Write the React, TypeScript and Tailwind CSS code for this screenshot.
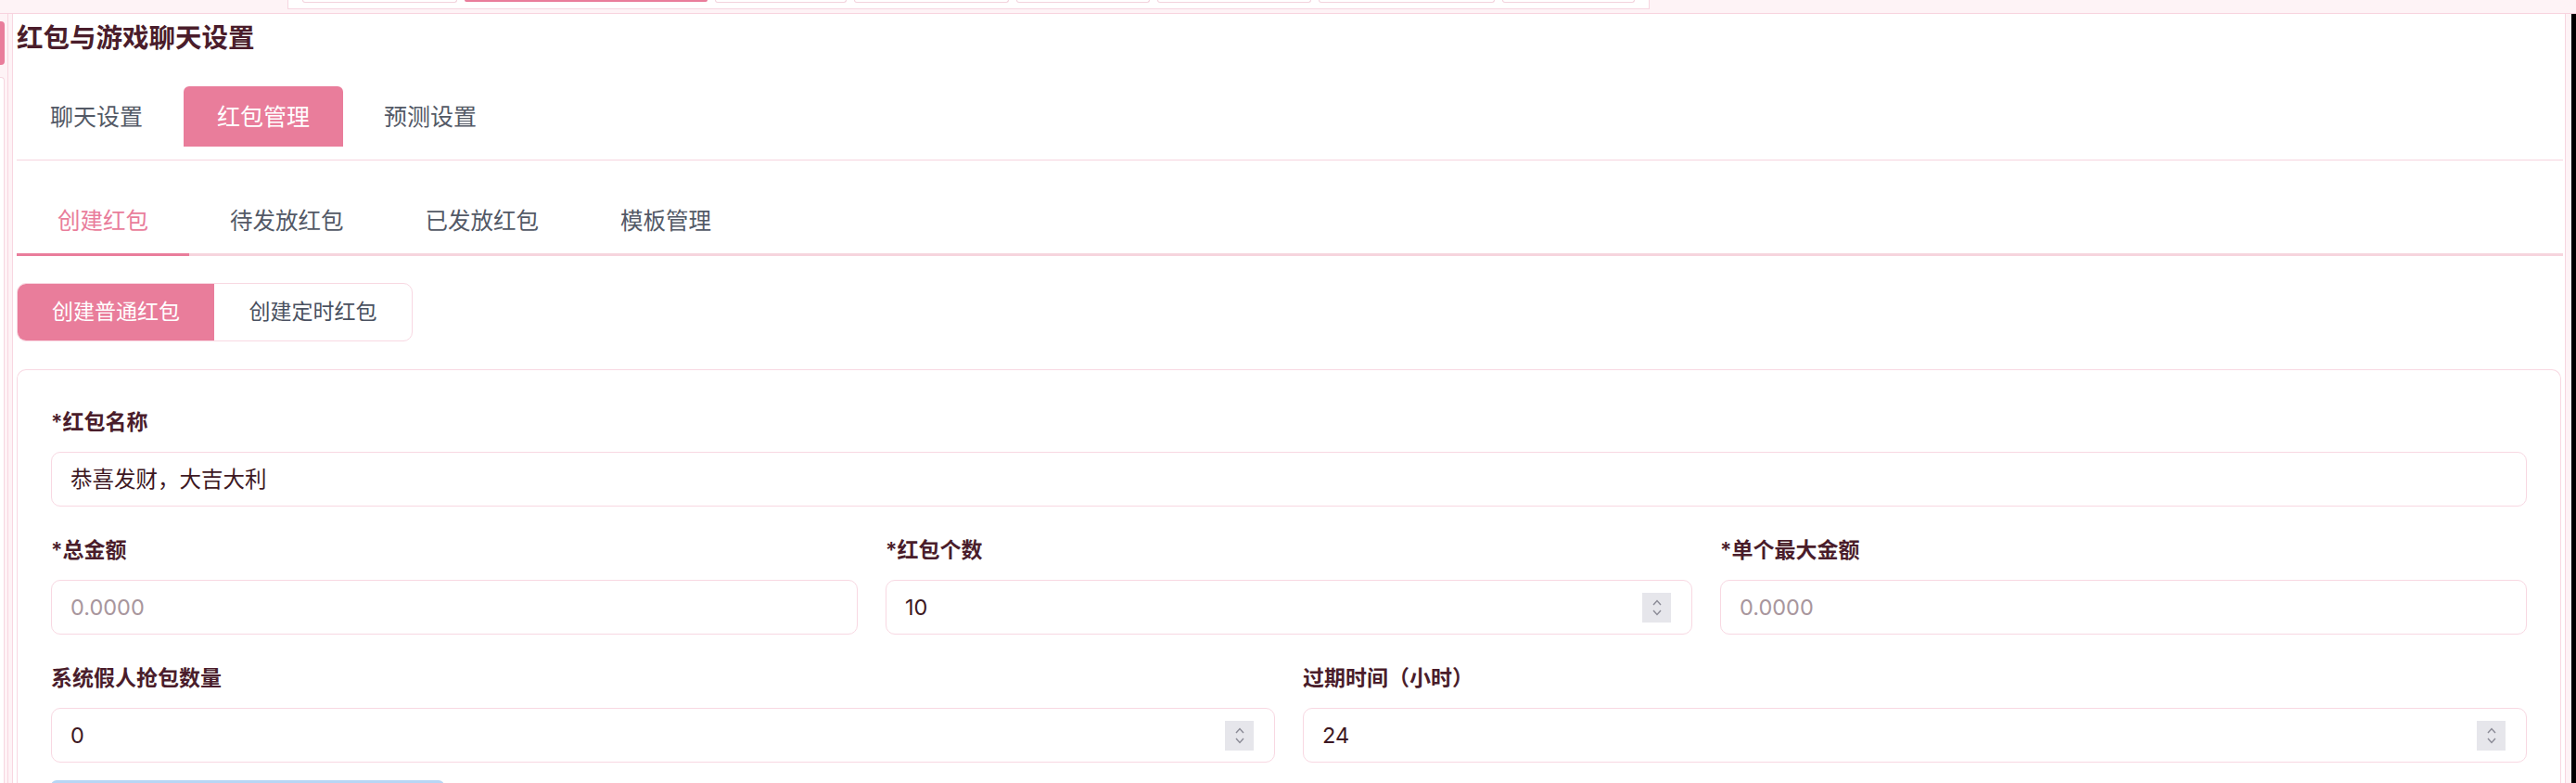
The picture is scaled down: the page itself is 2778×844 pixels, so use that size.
import React from 'react';

const PINK = 'bg-[#e97d9b]';

// bottoms of the top navigation tabs that stay visible above the card
const topTabs = [
  { w: 'w-[167px]' },
  { w: 'w-[262px]', active: true },
  { w: 'w-[142px]' },
  { w: 'w-[167px]' },
  { w: 'w-[144px]' },
  { w: 'w-[166px]' },
  { w: 'w-[190px]' },
  { w: 'w-[143px]' },
];

const Spinner: React.FC = () => (
  <div className="flex h-[32px] w-[31px] shrink-0 flex-col items-center justify-center gap-[4px] bg-[#e6e6eb]">
    <svg width="10" height="7" viewBox="0 0 10 7" fill="none">
      <polyline points="1,6 5,1.5 9,6" stroke="#8b8b96" strokeWidth="1.4" />
    </svg>
    <svg width="10" height="7" viewBox="0 0 10 7" fill="none">
      <polyline points="1,1 5,5.5 9,1" stroke="#8b8b96" strokeWidth="1.4" />
    </svg>
  </div>
);

interface FieldProps {
  label: string;
  value?: string;
  placeholder?: string;
  spinner?: boolean;
}

const Field: React.FC<FieldProps> = ({ label, value, placeholder, spinner }) => (
  <div className="flex flex-col">
    <label className="mb-[16px] text-[23px] font-semibold leading-[32px] text-[#4a1d2b]">{label}</label>
    <div className="flex h-[59px] items-center rounded-[10px] border border-[#f8d8e2] bg-white pl-[20px] pr-[22px]">
      <span
        className={
          'flex-1 text-[23.5px] leading-[32px] ' + (value ? 'text-[#3d1823]' : 'text-[#a8969d]')
        }
      >
        {value ?? placeholder}
      </span>
      {spinner && <Spinner />}
    </div>
  </div>
);

export default function App() {
  return (
    <div className="flex h-[844px] w-[2778px] flex-col overflow-hidden bg-[#fef3f6] font-['Inter','Noto_Sans_CJK_SC',sans-serif]">
      {/* top bar */}
      <div className="h-[15px] shrink-0 border-b border-[#f8d3df]">
        <div className="ml-[310px] flex h-[10px] w-[1469px] gap-[8px] border-x border-b border-[#f6d6e0] bg-white pl-[15px]">
          {topTabs.map((t, i) =>
            t.active ? (
              <div key={i} className={`${t.w} h-[2px] rounded-b-[3px] ${PINK}`} />
            ) : (
              <div key={i} className={`${t.w} h-[3px] rounded-b-[3px] border-x border-b border-[#f3d3dd] bg-white`} />
            )
          )}
        </div>
      </div>

      <div className="flex min-h-0 flex-1">
        {/* sidebar edge */}
        <div className="flex w-[5px] shrink-0 flex-col">
          <div className={`mt-[8px] h-[47px] shrink-0 rounded-r-[4px] ${PINK}`} />
          <div className="mt-[13px] flex-1 rounded-tr-[4px] border-r border-t border-[#f6d6e0] bg-white" />
        </div>

        <div className="ml-[3px] flex flex-1 border-l border-[#f8d6e0] pl-[4px]">
          <div className="flex flex-1 flex-col overflow-hidden border-x border-[#f8d6e0] bg-white pl-[4px] pr-[2px] pt-[8px]">
            <h1 className="shrink-0 text-[28.5px] font-bold leading-[36px] text-[#4a1d2b]">红包与游戏聊天设置</h1>

            {/* primary tabs */}
            <div className="mt-[34px] flex shrink-0 gap-[8px] border-b border-[#f6d4de] pb-[14px]">
              {['聊天设置', '红包管理', '预测设置'].map((t) => (
                <button
                  key={t}
                  className={
                    'h-[65px] rounded-t-[6px] px-[36px] text-[25px] leading-[32px] ' +
                    (t === '红包管理' ? `${PINK} text-white` : 'text-[#535966]')
                  }
                >
                  {t}
                </button>
              ))}
            </div>

            {/* secondary tabs */}
            <div className="mt-[17px] flex shrink-0 border-b-[3px] border-[#f6d5dd]">
              {['创建红包', '待发放红包', '已发放红包', '模板管理'].map((t) => (
                <button
                  key={t}
                  className={
                    '-mb-[3px] border-b-[3px] px-[44px] pb-[19px] pt-[32px] text-[24.5px] leading-[32px] ' +
                    (t === '创建红包' ? 'border-[#e97d9b] text-[#e97d9b]' : 'border-transparent text-[#535966]')
                  }
                >
                  {t}
                </button>
              ))}
            </div>

            {/* create type switch */}
            <div className="mt-[29px] flex h-[63px] w-[427px] shrink-0 overflow-hidden rounded-[10px] border border-[#f8d8e2]">
              <button className={`w-[212px] text-[23px] text-white ${PINK}`}>创建普通红包</button>
              <button className="flex-1 text-[23px] text-[#4a5160]">创建定时红包</button>
            </div>

            {/* form */}
            <div className="mr-[2px] mt-[30px] flex shrink-0 flex-col gap-[31px] rounded-t-[10px] border-x border-t border-[#f8d8e2] px-[36px] pb-[36px] pt-[40px]">
              <Field label="*红包名称" value="恭喜发财，大吉大利" />
              <div className="grid grid-cols-3 gap-x-[30px]">
                <Field label="*总金额" placeholder="0.0000" />
                <Field label="*红包个数" value="10" spinner />
                <Field label="*单个最大金额" placeholder="0.0000" />
              </div>
              <div className="grid grid-cols-2 gap-x-[30px]">
                <Field label="系统假人抢包数量" value="0" spinner />
                <Field label="过期时间（小时）" value="24" spinner />
              </div>
              {/* submit button, only its top edge is in view */}
              <button aria-label="提交" className="-mt-[12px] h-[52px] w-[424px] shrink-0 rounded-t-[6px] bg-[#b7d6f5]" />
            </div>
          </div>
          <div className="w-[6px] shrink-0" />
        </div>
        <div className="w-[5px] shrink-0 bg-black" />
      </div>
    </div>
  );
}
